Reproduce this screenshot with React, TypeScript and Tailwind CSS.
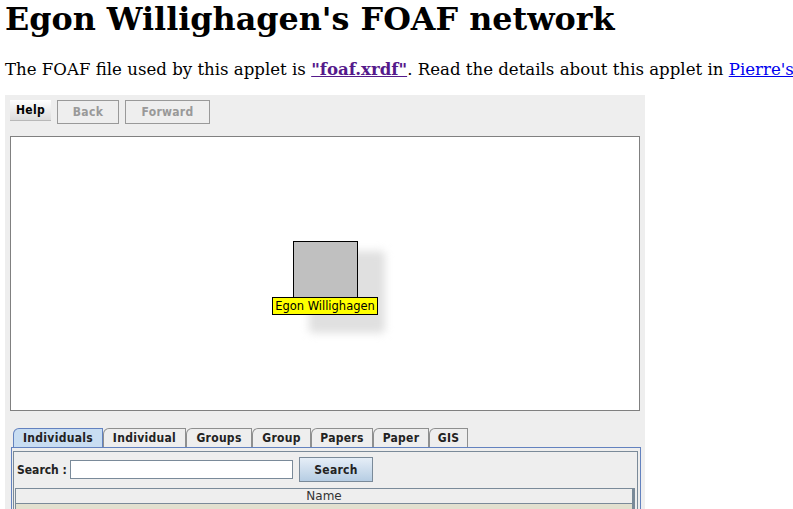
import React from "react";

const tabs = ["Individuals", "Individual", "Groups", "Group", "Papers", "Paper", "GIS"];
const tabW = [90, 83, 66, 59, 62, 56, 39];

export default function App() {
  return (
    <div className="w-[793px] h-[509px] overflow-hidden bg-white text-black relative">
      <h1 className="pl-[5px] pt-0 m-0 text-[31.8px] leading-[37px] font-bold whitespace-nowrap [font-family:'DejaVu_Serif',serif]">
        Egon Willighagen's FOAF network
      </h1>
      <p className="pl-[5px] mt-[23px] text-[16.6px] leading-[19px] whitespace-nowrap [font-family:'DejaVu_Serif',serif]">
        The FOAF file used by this applet is{" "}
        <a className="font-bold underline text-[#551a8b]" href="#">"foaf.xrdf"</a>. Read the details about this applet in{" "}
        <a className="underline text-[#0000ee]" href="#">Pierre's</a>
      </p>
      <div className="ml-[5px] mt-[16px] w-[640px] h-[420px] bg-[#eeeeee] tracking-[0.3px] [font-family:'DejaVu_Sans_Condensed','DejaVu_Sans',sans-serif] flex flex-col">
        <div className="flex items-start gap-[6px] pl-[5px] pt-[5px]">
          <div className="w-[41px] h-[21px] bg-gradient-to-b from-white to-[#dcdcdc] border-b border-[#b8b8b8] flex items-center justify-center text-[12px] font-bold">
            Help
          </div>
          <div className="w-[62px] h-[24px] border border-[#999999] flex items-center justify-center text-[12px] font-bold text-[#999999]">
            Back
          </div>
          <div className="w-[85px] h-[24px] border border-[#999999] flex items-center justify-center text-[12px] font-bold text-[#999999]">
            Forward
          </div>
        </div>
        <div className="ml-[5px] mt-[12px] w-[630px] h-[275px] bg-white border border-[#808080] relative">
          <div className="absolute left-[298px] top-[114px] w-[76px] h-[82px] bg-[#e0e0e0] blur-[4px] rounded-[4px]" />
          <div className="absolute left-[282px] top-[104px] w-[65px] h-[57px] bg-[#c0c0c0] border border-black" />
          <div className="absolute left-[261px] top-[160px] w-[106px] h-[18px] pt-[2px] bg-[#ffff00] border border-black flex items-center justify-center text-[11.5px] leading-none tracking-normal whitespace-nowrap [font-family:'DejaVu_Sans',sans-serif]">
            Egon Willighagen
          </div>
        </div>
        <div className="ml-[8px] mt-[17px] flex items-end h-[19px]">
          {tabs.map((t, i) => (
            <div
              key={t}
              style={{ width: tabW[i] }}
              className={
                i === 0
                  ? "h-[19px] bg-[#c8ddf2] border-t border-l border-r border-[#6382bf] rounded-tl-[6px] flex items-center justify-center text-[12px] font-bold text-[#222] whitespace-nowrap"
                  : "h-[19px] bg-[#eeeeee] border-t border-l border-r border-[#8e8f8f] rounded-tl-[6px] flex items-center justify-center text-[12px] font-bold text-[#222] whitespace-nowrap"
              }
            >
              {t}
            </div>
          ))}
        </div>
        <div className="ml-[6px] w-[630px] flex-1 border-t border-l border-r border-[#6382bf] pt-[3px] pl-px pr-[2px]">
          <div className="h-full border-t border-l border-r border-[#7a8a99] flex flex-col">
            <div className="flex items-center h-[35px] pl-[3px]">
              <span className="w-[53px] shrink-0 whitespace-nowrap text-[12px] tracking-normal font-bold text-[#222]">Search :</span>
              <div className="w-[223px] shrink-0 h-[19px] bg-white border border-[#7a8a99]" />
              <div className="ml-[6px] w-[74px] shrink-0 h-[25px] bg-gradient-to-b from-[#e6eef7] to-[#b6cde3] border border-[#7a8a99] flex items-center justify-center text-[12px] font-bold text-[#222]">
                Search
              </div>
            </div>
            <div className="ml-px mr-[2px] mt-[1px] border-t border-l border-r-[3px] border-[#7a8a99] flex-1 flex flex-col">
              <div className="h-[15px] bg-[#eeeeee] border-b border-[#7a8a99] flex items-center justify-center text-[12px] text-[#333] tracking-normal [font-family:'DejaVu_Sans',sans-serif]">
                Name
              </div>
              <div className="flex-1 bg-[#e2e0cf]" />
            </div>
          </div>
        </div>
      </div>
    </div>
  );
}
